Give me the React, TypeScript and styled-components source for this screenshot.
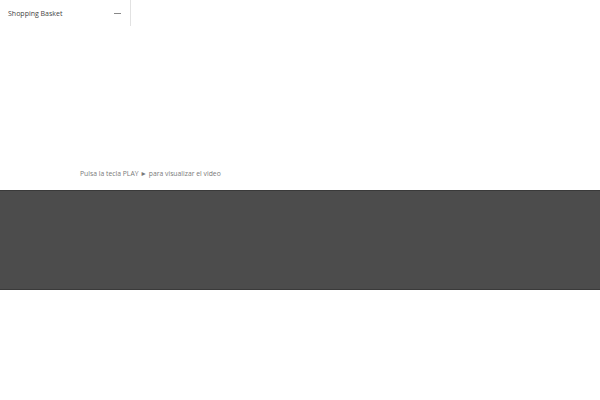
import React from 'react';
import styled, { createGlobalStyle } from 'styled-components';

const GlobalStyle = createGlobalStyle`
  html, body {
    margin: 0;
    padding: 0;
    background: #ffffff;
    font-family: "Open Sans", "Liberation Sans", sans-serif;
  }
`;

const Page = styled.div`
  width: 600px;
  height: 400px;
  display: flex;
  flex-direction: column;
  overflow: hidden;
`;

const Top = styled.div`
  height: 190px;
  display: flex;
  flex-direction: column;
`;

const Basket = styled.div`
  width: 122px;
  height: 26px;
  padding-left: 8px;
  display: flex;
  align-items: center;
  justify-content: space-between;
  border-right: 1px solid #e2e2e2;
  box-sizing: content-box;
`;

const BasketLabel = styled.span`
  font-size: 7px;
  color: #444;
`;

const Collapse = styled.span`
  width: 7px;
  height: 1px;
  background: #888;
  margin-right: 9px;
`;

const Hint = styled.p`
  margin: auto 0 12px 80px;
  font-size: 6.8px;
  color: #7a7a7a;
`;

const Player = styled.div`
  height: 100px;
  background: #4c4c4c;
  border-top: 1px solid #3a3a3a;
  border-bottom: 1px solid #3a3a3a;
  box-sizing: border-box;
`;

export default function App() {
  return (
    <Page>
      <GlobalStyle />
      <Top>
        <Basket>
          <BasketLabel>Shopping Basket</BasketLabel>
          <Collapse />
        </Basket>
        <Hint>Pulsa la tecla PLAY ► para visualizar el video</Hint>
      </Top>
      <Player />
    </Page>
  );
}
